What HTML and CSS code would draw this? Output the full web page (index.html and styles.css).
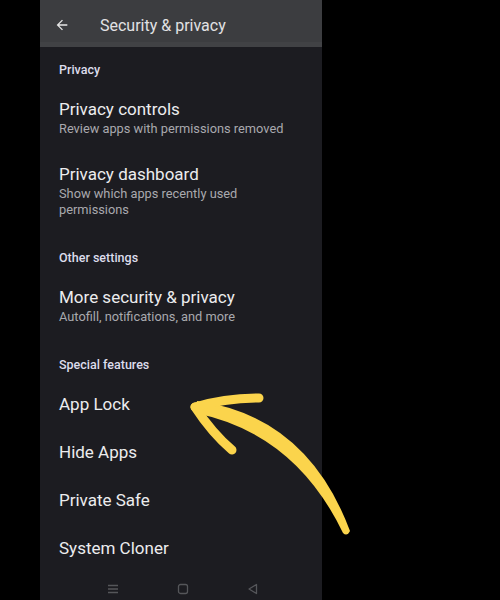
FILE: index.html
```html
<!DOCTYPE html>
<html>
<head>
<meta charset="utf-8">
<link rel="stylesheet" href="styles.css">
</head>
<body>
<div class="phone">
  <div class="appbar">
    <svg class="back" width="16" height="16" viewBox="0 0 24 24"><path d="M20 11H7.83l5.59-5.59L12 4l-8 8 8 8 1.41-1.41L7.83 13H20v-2z" fill="#e6e6e6"/></svg>
    <span class="appbar-title">Security &amp; privacy</span>
  </div>
  <div class="section-head first">Privacy</div>
  <div class="item">
    <div class="item-title">Privacy controls</div>
    <div class="item-sub">Review apps with permissions removed</div>
  </div>
  <div class="item">
    <div class="item-title">Privacy dashboard</div>
    <div class="item-sub">Show which apps recently used<br>permissions</div>
  </div>
  <div class="section-head">Other settings</div>
  <div class="item">
    <div class="item-title">More security &amp; privacy</div>
    <div class="item-sub">Autofill, notifications, and more</div>
  </div>
  <div class="section-head">Special features</div>
  <div class="item"><div class="item-title">App Lock</div></div>
  <div class="item"><div class="item-title">Hide Apps</div></div>
  <div class="item"><div class="item-title">Private Safe</div></div>
  <div class="item"><div class="item-title">System Cloner</div></div>
  <div class="navbar">
    <svg width="12" height="12" viewBox="0 0 12 12"><path d="M1 2.5h10M1 6h10M1 9.5h10" stroke="#55565a" stroke-width="1.3"/></svg>
    <svg width="12" height="12" viewBox="0 0 12 12"><rect x="1.5" y="1.5" width="9" height="9" rx="2" fill="none" stroke="#55565a" stroke-width="1.3"/></svg>
    <svg width="12" height="12" viewBox="0 0 12 12"><path d="M9.5 1.5v9L2 6z" fill="none" stroke="#55565a" stroke-width="1.3" stroke-linejoin="round"/></svg>
  </div>
</div>
<svg class="arrow" width="500" height="600" viewBox="0 0 500 600">
  <path d="M197 401 Q307 416 350 531 Q347 537 343 533 Q295 433 195 413 Z" fill="#fbd44c"/>
  <path d="M195 407 Q225 398 259 398" fill="none" stroke="#fbd44c" stroke-width="9" stroke-linecap="round"/>
  <path d="M195 407 Q212 433 232 450" fill="none" stroke="#fbd44c" stroke-width="9" stroke-linecap="round"/>
</svg>
</body>
</html>
```
FILE: styles.css
```css
html, body {
  margin: 0;
  padding: 0;
  background: #000;
}
body {
  width: 500px;
  height: 600px;
  position: relative;
  overflow: hidden;
  font-family: Roboto, "Noto Sans", sans-serif;
}
.phone {
  width: 282px;
  height: 600px;
  margin-left: 40px;
  background: #1c1c21;
  display: flex;
  flex-direction: column;
}
.appbar {
  height: 47px;
  background: #3c3d40;
  border-bottom: 5px solid #414245;
  display: flex;
  align-items: center;
  padding-left: 14px;
  padding-top: 8px;
  box-sizing: border-box;
  flex-shrink: 0;
}
.back {
  margin-right: 30px;
}
.appbar-title {
  color: #e2e2e4;
  font-size: 16px;
}
.section-head {
  padding: 19px 19px 7px;
  font-size: 12.5px;
  line-height: 16px;
  font-weight: 500;
  color: #dcdcec;
}
.section-head.first {
  padding-top: 15px;
}
.item {
  padding: 13px 19px;
}
.item-title {
  font-size: 17px;
  line-height: 22px;
  color: #ececee;
}
.item-sub {
  margin-top: 1px;
  font-size: 12.8px;
  line-height: 16px;
  color: #a9a9ae;
}
.navbar {
  margin-top: auto;
  height: 22px;
  display: flex;
  justify-content: center;
  align-items: center;
  gap: 58px;
  padding-left: 4px;
}
.arrow {
  position: absolute;
  left: 0;
  top: 0;
  pointer-events: none;
}
```
